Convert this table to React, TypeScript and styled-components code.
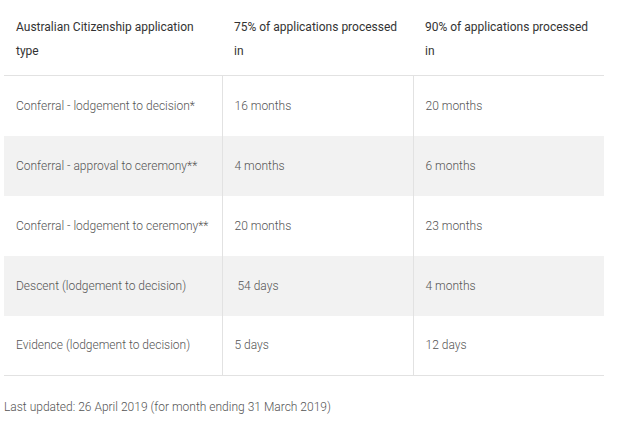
import styled, { createGlobalStyle } from "styled-components";

const GlobalStyle = createGlobalStyle`
body {
    margin: 0;
    padding: 0 4px;
    background: #fff;
    font-family: Roboto, "Liberation Sans", sans-serif;
}
`

const rows = [
    ["Conferral - lodgement to decision*", "16 months", "20 months"],
    ["Conferral - approval to ceremony**", "4 months", "6 months"],
    ["Conferral - lodgement to ceremony**", "20 months", "23 months"],
    ["Descent (lodgement to decision)", "\u00a054 days", "4 months"],
    ["Evidence (lodgement to decision)", "5 days", "12 days"],
];

export default function App() {
    return <Page>
        <GlobalStyle />
        <Table>
            <colgroup>
                <col style={{ width: 218 }} />
                <col style={{ width: 191 }} />
                <col style={{ width: 191 }} />
            </colgroup>
            <thead>
                <tr>
                    <HeadCell>Australian Citizenship application type</HeadCell>
                    <HeadCell>75% of applications processed in</HeadCell>
                    <HeadCell>90% of applications processed in</HeadCell>
                </tr>
            </thead>
            <tbody>
                {rows.map((r, i) => (
                    <Row key={i} $shaded={i % 2 === 1}>
                        {r.map((c, j) => <Cell key={j}>{c}</Cell>)}
                    </Row>
                ))}
            </tbody>
        </Table>
        <Footer>Last updated: 26 April 2019 (for month ending 31 March 2019)</Footer>
    </Page>
}

const Page = styled.div`
width: 600px;
`

const Table = styled.table`
width: 600px;
border-collapse: collapse;
table-layout: fixed;
border-bottom: 1px solid #e2e2e2;
`

const HeadCell = styled.th`
text-align: left;
vertical-align: top;
padding: 15px 12px 12px;
font-size: 12px;
font-weight: 400;
line-height: 24px;
color: #333;
border-bottom: 1px solid #e2e2e2;
`

const Row = styled.tr<{ $shaded: boolean }>`
height: 60px;
background: ${p => p.$shaded ? "#f2f2f2" : "#fff"};
`

const Cell = styled.td`
padding: 0 12px;
font-size: 12px;
font-weight: 300;
line-height: 20px;
color: #555;
vertical-align: middle;
& + & {
    border-left: 1px solid #e2e2e2;
}
`

const Footer = styled.p`
margin: 21px 0 0;
font-size: 12px;
font-weight: 300;
line-height: 20px;
color: #555;
`
